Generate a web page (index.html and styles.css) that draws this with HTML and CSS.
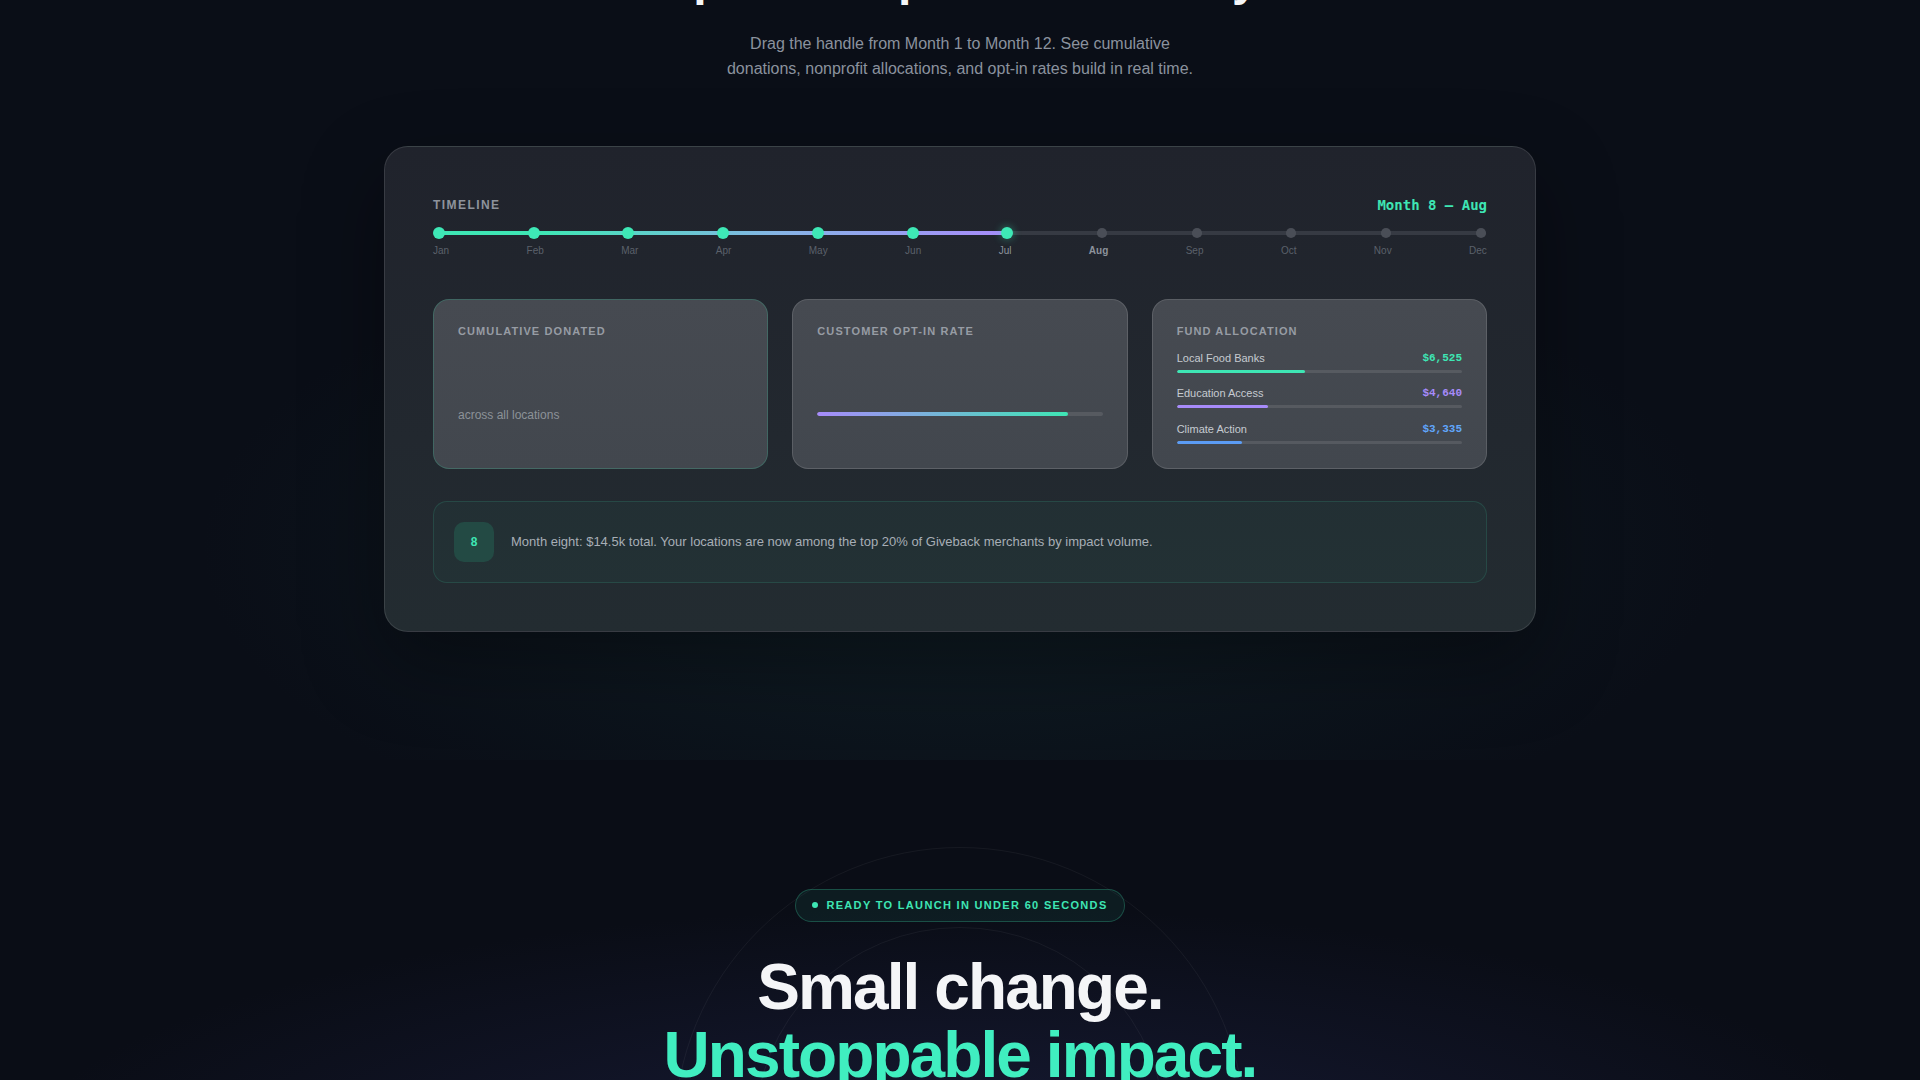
FILE: index.html
```html
<!DOCTYPE html>
<html lang="en">
<head>
<meta charset="utf-8">
<title>Giveback impact simulator</title>
<link rel="stylesheet" href="styles.css">
</head>
<body>
<section class="sim">
  <div class="sim-head">
    <h2 class="sim-title">Spot an impact soar swiftly</h2>
    <p class="sim-sub">Drag the handle from Month 1 to Month 12. See cumulative donations, nonprofit allocations, and opt-in rates build in real time.</p>
  </div>

  <div class="sim-card">
    <div class="tl-head">
      <span class="tl-title">Timeline</span>
      <span class="tl-month">Month 8 — Aug</span>
    </div>
    <div class="tl-track">
      <div class="tl-line"></div>
      <div class="tl-fill" style="width:568px"></div>
      <span class="tl-dot on"></span>
      <span class="tl-dot on"></span>
      <span class="tl-dot on"></span>
      <span class="tl-dot on"></span>
      <span class="tl-dot on"></span>
      <span class="tl-dot on"></span>
      <span class="tl-dot on cur"></span>
      <span class="tl-dot"></span>
      <span class="tl-dot"></span>
      <span class="tl-dot"></span>
      <span class="tl-dot"></span>
      <span class="tl-dot"></span>
    </div>
    <div class="tl-labels">
      <span>Jan</span><span>Feb</span><span>Mar</span><span>Apr</span><span>May</span><span>Jun</span>
      <span class="lit">Jul</span><span class="lit strong">Aug</span><span>Sep</span><span>Oct</span><span>Nov</span><span>Dec</span>
    </div>

    <div class="stats">
      <div class="stat hl">
        <div class="stat-label">Cumulative Donated</div>
        <div class="stat-value"></div>
        <div class="stat-sub">across all locations</div>
      </div>
      <div class="stat">
        <div class="stat-label">Customer Opt-In Rate</div>
        <div class="stat-value"></div>
        <div class="bar bar-optin"><div class="bar-fill fill-optin" style="width:87.7%"></div></div>
      </div>
      <div class="stat">
        <div class="stat-label">Fund Allocation</div>
        <div class="alloc">
          <div class="alloc-row">
            <div class="alloc-head"><span>Local Food Banks</span><span class="amt amt-teal">$6,525</span></div>
            <div class="bar bar-thin"><div class="bar-fill fill-teal" style="width:45%"></div></div>
          </div>
          <div class="alloc-row">
            <div class="alloc-head"><span>Education Access</span><span class="amt amt-purple">$4,640</span></div>
            <div class="bar bar-thin"><div class="bar-fill fill-purple" style="width:32%"></div></div>
          </div>
          <div class="alloc-row">
            <div class="alloc-head"><span>Climate Action</span><span class="amt amt-blue">$3,335</span></div>
            <div class="bar bar-thin"><div class="bar-fill fill-blue" style="width:23%"></div></div>
          </div>
        </div>
      </div>
    </div>

    <div class="insight">
      <div class="insight-badge">8</div>
      <p class="insight-text">Month eight: $14.5k total. Your locations are now among the top 20% of Giveback merchants by impact volume.</p>
    </div>
  </div>
</section>

<section class="cta">
  <div class="ring ring-outer"></div>
  <div class="ring ring-inner"></div>
  <div class="cta-inner">
    <div class="cta-badge"><span class="cta-dot"></span>Ready to launch in under 60 seconds</div>
    <h2 class="cta-title">Small change.<span class="cta-accent">Unstoppable impact.</span></h2>
  </div>
</section>
</body>
</html>
```
FILE: styles.css
```css
html, body {
  margin: 0;
  padding: 0;
}

body {
  background: #0a0d16;
  font-family: "Liberation Sans", Arial, sans-serif;
  color: #e5e7eb;
}

/* ---------- Simulator section ---------- */
.sim {
  display: flow-root;
  padding-bottom: 128px;
  background:
    radial-gradient(ellipse 55% 60% at 50% 72%, rgba(28, 66, 68, 0.3), rgba(0, 0, 0, 0) 72%),
    #0a0e17;
}

.sim-head {
  margin-top: -47px;
  text-align: center;
}

.sim-title {
  margin: 0 0 26px;
  font-size: 48px;
  line-height: 1.1;
  font-weight: 700;
  letter-spacing: -0.02em;
  color: #f5f6f8;
}

.sim-sub {
  margin: 0 auto;
  max-width: 480px;
  font-size: 16px;
  line-height: 1.55;
  color: #8b929e;
}

.sim-card {
  box-sizing: border-box;
  width: 1152px;
  margin: 65px auto 0;
  padding: 48px;
  border: 1px solid rgba(255, 255, 255, 0.11);
  border-radius: 24px;
  background: linear-gradient(180deg, #20232c 0%, #22282f 60%, #232c31 100%);
  box-shadow: 0 30px 80px rgba(0, 0, 0, 0.35);
}

/* timeline */
.tl-head {
  display: flex;
  justify-content: space-between;
  align-items: center;
  height: 20px;
}

.tl-title {
  font-size: 12px;
  font-weight: 700;
  letter-spacing: 0.12em;
  text-transform: uppercase;
  color: #8e939c;
}

.tl-month {
  font-family: "DejaVu Sans Mono", monospace;
  font-size: 14px;
  font-weight: 700;
  color: #3ee6b4;
}

.tl-track {
  position: relative;
  height: 12px;
  margin-top: 12px;
  display: flex;
  justify-content: space-between;
  align-items: center;
}

.tl-line {
  position: absolute;
  left: 6px;
  right: 6px;
  top: 4px;
  height: 4px;
  border-radius: 2px;
  background: #363a43;
}

.tl-fill {
  position: absolute;
  left: 6px;
  top: 4px;
  height: 4px;
  border-radius: 2px;
  background: linear-gradient(90deg, #3ee6b4 0%, #3ee6b4 18%, #86b4e6 60%, #a78bfa 100%);
}

.tl-dot {
  position: relative;
  width: 12px;
  height: 12px;
  border-radius: 50%;
  background: #4a4e57;
  transform: scale(0.85);
}

.tl-dot.on {
  background: #3ee8b6;
  transform: none;
}

.tl-dot.cur {
  box-shadow: 0 0 8px rgba(62, 232, 182, 0.45);
}

.tl-labels {
  display: flex;
  justify-content: space-between;
  margin-top: 5px;
  font-size: 10px;
  line-height: 14px;
  color: #5b616b;
}

.tl-labels .lit {
  color: #8d939c;
}

.tl-labels .strong {
  font-weight: 700;
}

/* stat cards */
.stats {
  display: grid;
  grid-template-columns: repeat(3, 1fr);
  gap: 24px;
  margin-top: 41px;
}

.stat {
  border: 1px solid rgba(255, 255, 255, 0.13);
  border-radius: 16px;
  padding: 24px 24px 24px;
  background: linear-gradient(180deg, #464a51 0%, #42474e 100%);
}

.stat.hl {
  border-color: rgba(62, 230, 180, 0.2);
}

.stat-label {
  font-size: 11px;
  font-weight: 700;
  letter-spacing: 0.1em;
  line-height: 14px;
  text-transform: uppercase;
  color: #979ca4;
}

.stat-value {
  height: 52px;
  margin-top: 9px;
}

.stat-sub {
  margin-top: 7px;
  font-size: 12px;
  line-height: 18px;
  color: #8c9298;
}

.bar {
  border-radius: 2px;
  background: rgba(255, 255, 255, 0.1);
  overflow: hidden;
}

.bar-optin {
  margin-top: 13px;
  height: 4px;
}

.bar-thin {
  margin-top: 5px;
  height: 3px;
}

.bar-fill {
  height: 100%;
  border-radius: 2px;
}

.fill-optin {
  background: linear-gradient(90deg, #a78bfa 0%, #3ee6b4 100%);
}

.fill-teal { background: #3ee6b4; }
.fill-purple { background: #a78bfa; }
.fill-blue { background: #5b9cf5; }

.alloc {
  margin-top: 12.5px;
  display: flex;
  flex-direction: column;
  gap: 13.5px;
}

.alloc-head {
  display: flex;
  justify-content: space-between;
  align-items: center;
  height: 14px;
  font-size: 11px;
  color: #c6cbd1;
}

.amt {
  font-family: "Liberation Mono", monospace;
  font-weight: 700;
  font-size: 11px;
}

.amt-teal { color: #3ee6b4; }
.amt-purple { color: #a78bfa; }
.amt-blue { color: #60a5fa; }

/* insight */
.insight {
  margin-top: 32px;
  display: flex;
  align-items: center;
  gap: 17px;
  padding: 20px;
  border: 1px solid rgba(62, 230, 180, 0.14);
  border-radius: 14px;
  background: rgba(62, 230, 180, 0.035);
}

.insight-badge {
  flex: none;
  width: 40px;
  height: 40px;
  border-radius: 10px;
  background: #234a44;
  color: #3ee6b4;
  font-size: 12px;
  font-weight: 700;
  display: flex;
  align-items: center;
  justify-content: center;
}

.insight-text {
  margin: 0;
  font-size: 13px;
  line-height: 20px;
  color: #a7aeb6;
}

/* ---------- CTA section ---------- */
.cta {
  position: relative;
  overflow: hidden;
  padding: 129px 0 80px;
  background:
    radial-gradient(ellipse 62% 80% at 50% 100%, rgba(34, 38, 80, 0.55), rgba(0, 0, 0, 0) 80%),
    #0a0d16;
}

.ring {
  position: absolute;
  left: 50%;
  top: 373px;
  border-radius: 50%;
  border: 1px solid rgba(255, 255, 255, 0.05);
  transform: translate(-50%, -50%);
}

.ring-outer {
  width: 570px;
  height: 570px;
}

.ring-inner {
  width: 410px;
  height: 410px;
}

.cta-inner {
  position: relative;
  display: flex;
  flex-direction: column;
  align-items: center;
  text-align: center;
}

.cta-badge {
  box-sizing: border-box;
  display: flex;
  align-items: center;
  gap: 8px;
  height: 33px;
  padding: 0 16px;
  border: 1px solid rgba(62, 230, 180, 0.25);
  border-radius: 999px;
  background: rgba(62, 230, 180, 0.07);
  color: #3ee6b4;
  font-size: 11px;
  font-weight: 700;
  letter-spacing: 0.12em;
  text-transform: uppercase;
}

.cta-dot {
  width: 6px;
  height: 6px;
  border-radius: 50%;
  background: #3ee6b4;
}

.cta-title {
  margin: 31px 0 0;
  font-size: 64px;
  line-height: 68px;
  font-weight: 700;
  letter-spacing: -0.03em;
  color: #f4f5f7;
}

.cta-accent {
  display: block;
  color: #40eec0;
}
```
